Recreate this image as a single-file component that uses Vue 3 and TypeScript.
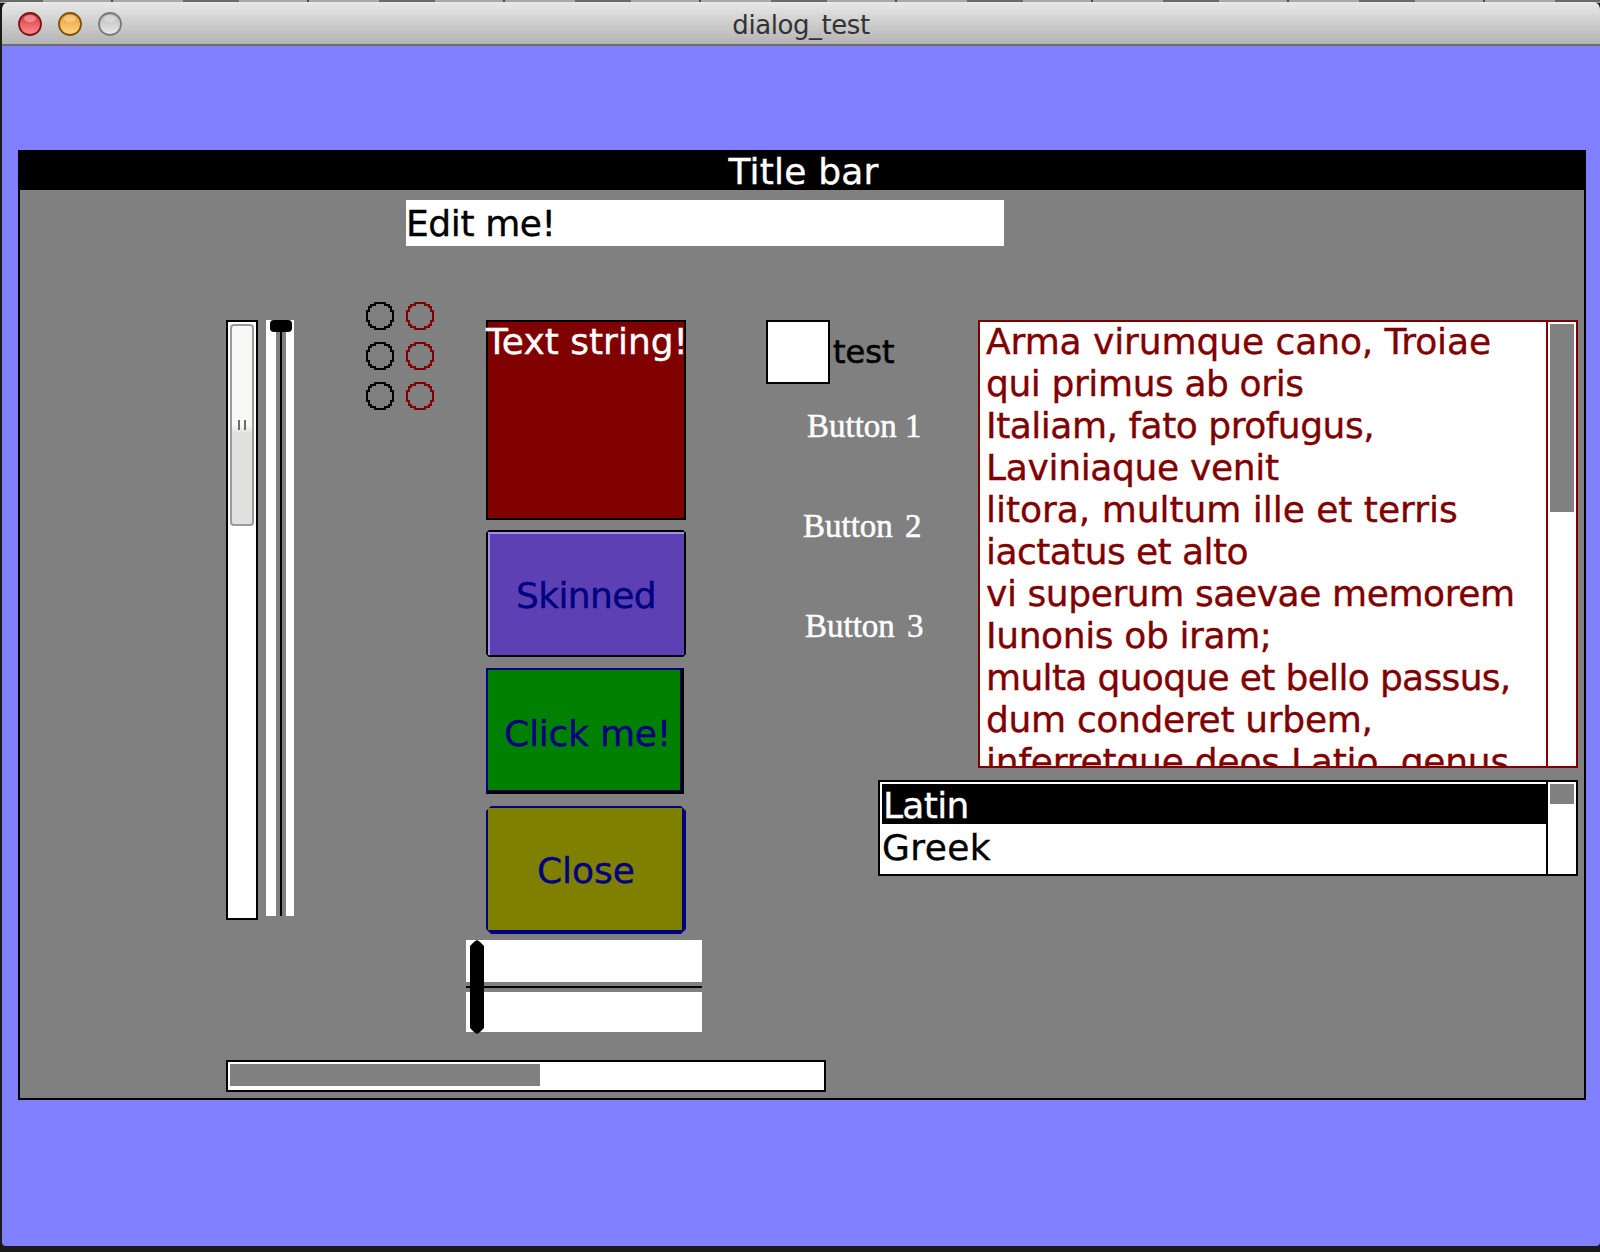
<script setup lang="ts">
const poem: { text: string; spacing: number }[] = [
  { text: 'Arma virumque cano, Troiae', spacing: -0.08 },
  { text: 'qui primus ab oris', spacing: -0.4 },
  { text: 'Italiam, fato profugus,', spacing: -0.49 },
  { text: 'Laviniaque venit', spacing: -0.32 },
  { text: 'litora, multum ille et terris', spacing: -0.03 },
  { text: 'iactatus et alto', spacing: -0.57 },
  { text: 'vi superum saevae memorem', spacing: -0.41 },
  { text: 'Iunonis ob iram;', spacing: -0.38 },
  { text: 'multa quoque et bello passus,', spacing: -0.67 },
  { text: 'dum conderet urbem,', spacing: -0.32 },
  { text: 'inferretque deos Latio, genus', spacing: -0.21 }
]
const radioRows = [0, 1, 2]
const sideButtons: { label: string; shift: string }[] = [
  { label: 'Button 1', shift: 'b1' },
  { label: 'Button 2', shift: 'b2' },
  { label: 'Button 3', shift: 'b3' }
]
const lights = [
  { id: 'r', a: '#ff9090', b: '#d8303a', c: '#7c1418' },
  { id: 'o', a: '#ffd98a', b: '#e89a28', c: '#80500c' },
  { id: 'g', a: '#ececec', b: '#b4b4b4', c: '#7a7a7a' }
]
</script>

<template>
  <div class="screen">
    <div class="menu-strip"></div>
    <div class="window">
      <header class="chrome">
        <div class="lights">
          <svg v-for="l in lights" :key="l.id" class="light" width="26" height="26" viewBox="0 0 26 26">
            <defs>
              <linearGradient :id="'lg' + l.id" x1="0" y1="0" x2="0" y2="1">
                <stop offset="0" :stop-color="l.b" />
                <stop offset="1" :stop-color="l.a" />
              </linearGradient>
            </defs>
            <circle cx="13" cy="13" r="11" :fill="'url(#lg' + l.id + ')'" :stroke="l.c" stroke-width="1.8" />
            <ellipse cx="13" cy="7.5" rx="6" ry="3.5" fill="#ffffff" opacity="0.35" />
          </svg>
        </div>
        <div class="chrome-title">dialog_test</div>
      </header>

      <main class="desktop">
        <section class="dialog">
          <div class="titlebar">Title bar</div>
          <div class="body">
            <div class="edit">Edit me!</div>

            <div class="widgets">
              <div class="vscroll">
                <div class="vthumb"><span class="grip"></span></div>
              </div>

              <div class="vslider">
                <div class="vtrack"><div class="vline"></div></div>
                <div class="vknob"></div>
              </div>

              <div class="radios">
                <template v-for="r in radioRows" :key="r">
                  <svg class="radio" width="28" height="28" viewBox="0 0 28 28" shape-rendering="crispEdges">
                    <path d="M9 1h10v2h4v2h2v4h2v10h-2v4h-2v2h-4v2H9v-2H5v-2H3v-4H1V9h2V5h2V3h4z" fill="none" stroke="#000" stroke-width="2" />
                  </svg>
                  <svg class="radio" width="28" height="28" viewBox="0 0 28 28" shape-rendering="crispEdges">
                    <path d="M9 1h10v2h4v2h2v4h2v10h-2v4h-2v2h-4v2H9v-2H5v-2H3v-4H1V9h2V5h2V3h4z" fill="none" stroke="#800000" stroke-width="2" />
                  </svg>
                </template>
              </div>

              <div class="center-col">
                <div class="textbox">Text string!</div>
                <div class="btn skinned">Skinned</div>
                <div class="btn clickme">Click me!</div>
                <div class="btn close">Close</div>
                <div class="hslider">
                  <div class="hband"></div>
                  <div class="hknob"></div>
                </div>
              </div>

              <div class="right-col">
                <div class="right-top">
                  <div class="check-col">
                    <div class="check-row">
                      <div class="checkbox"></div>
                      <span class="check-label">test</span>
                    </div>
                    <div v-for="b in sideButtons" :key="b.label" class="fancy" :class="b.shift">{{ b.label }}</div>
                  </div>

                  <div class="poem">
                    <div class="poem-text">
                      <div
                        v-for="(line, i) in poem"
                        :key="i"
                        class="poem-line"
                        :style="{ letterSpacing: line.spacing + 'px' }"
                      >{{ line.text }}</div>
                    </div>
                    <div class="poem-scroll"><div class="poem-thumb"></div></div>
                  </div>
                </div>

                <div class="listbox">
                  <div class="list-items">
                    <div class="item selected">Latin</div>
                    <div class="item greek">Greek</div>
                  </div>
                  <div class="list-scroll"><div class="list-thumb"></div></div>
                </div>
              </div>
            </div>

            <div class="progress"><div class="progress-fill"></div></div>
          </div>
        </section>
      </main>
    </div>
  </div>
</template>

<style>
html,
body {
  margin: 0;
  padding: 0;
  background: #1a1a1a;
}
</style>

<style scoped>
.screen {
  position: relative;
  width: 1600px;
  height: 1252px;
  background: #1a1a1a;
  overflow: hidden;
  font-family: "DejaVu Sans", sans-serif;
  -webkit-text-stroke: 0.35px currentColor;
}
.menu-strip {
  height: 3px;
  margin-bottom: -3px;
  background-color: #a8a8a8;
  background-image: linear-gradient(90deg, #4a4a4a 0 2px, transparent 2px 72px, #6a6a6a 72px 128px, transparent 128px);
  background-size: 196px 2px;
  background-position: 111px 0;
  background-repeat: repeat-x;
}
.window {
  position: relative;
  margin-left: 2px;
  width: 1598px;
  height: 1246px;
  box-sizing: border-box;
  padding-top: 2px;
  display: flex;
  flex-direction: column;
  overflow: hidden;
  border-radius: 0 0 4px 4px;
}
.chrome {
  position: relative;
  height: 44px;
  flex: none;
  box-sizing: border-box;
  background: linear-gradient(#e8e8e8, #b4b4b4);
  border-bottom: 2px solid #6e6e6e;
  border-radius: 7px 7px 0 0;
}
.lights {
  display: flex;
  gap: 14px;
  padding: 9px 0 0 15px;
}
.light {
  display: block;
}
.chrome-title {
  position: absolute;
  left: 0;
  right: 0;
  top: 7px;
  text-align: center;
  font-size: 26px;
  line-height: 32px;
  letter-spacing: -0.45px;
  color: #333;
  -webkit-text-stroke: 0;
}
.desktop {
  flex: 1;
  background: #8080ff;
  padding: 104px 14px 0 16px;
}
.dialog {
  width: 1568px;
  height: 950px;
  box-sizing: border-box;
  background: #808080;
  border: 2px solid #000;
  border-top: 0;
  display: flex;
  flex-direction: column;
}
.titlebar {
  margin: 0 -2px;
  height: 40px;
  flex: none;
  box-sizing: border-box;
  padding: 2px 0 0 3px;
  background: #000;
  color: #fff;
  font-size: 36px;
  line-height: 40px;
  text-align: center;
  letter-spacing: 0.2px;
}
.body {
  flex: 1;
  padding-top: 10px;
}
.edit {
  margin-left: 386px;
  width: 598px;
  height: 46px;
  background: #fff;
  color: #000;
  font-size: 36px;
  line-height: 48px;
  letter-spacing: -0.4px;
  white-space: nowrap;
}
.widgets {
  margin: 74px 0 0 206px;
  height: 740px;
  display: flex;
  align-items: flex-start;
}
.vscroll {
  width: 32px;
  height: 600px;
  box-sizing: border-box;
  flex: none;
  background: #fff;
  border: 2px solid #000;
  padding: 2px 2px 0 2px;
}
.vthumb {
  position: relative;
  height: 202px;
  box-sizing: border-box;
  border: 2px solid #9a9a9a;
  border-radius: 4px;
  background: linear-gradient(#f8f8f6 0, #f8f8f6 50%, #e0e0de 54%, #e0e0de 100%);
}
.grip {
  position: absolute;
  left: 6px;
  top: 94px;
  width: 8px;
  height: 10px;
  box-sizing: border-box;
  border-left: 2px solid #6e6e6e;
  border-right: 2px solid #6e6e6e;
}
.vslider {
  position: relative;
  margin-left: 8px;
  width: 28px;
  height: 596px;
  flex: none;
  background: #fff;
}
.vtrack {
  margin-left: 10px;
  width: 10px;
  height: 100%;
  background: #808080;
  display: flex;
  justify-content: center;
}
.vline {
  width: 2px;
  height: 100%;
  background: #000;
}
.vknob {
  position: absolute;
  left: 4px;
  top: 0;
  width: 22px;
  height: 12px;
  background: #000;
  border-radius: 4px;
}
.radios {
  margin-left: 72px;
  margin-top: -18px;
  flex: none;
  display: grid;
  grid-template-columns: 28px 28px;
  grid-auto-rows: 28px;
  gap: 12px;
}
.radio {
  display: block;
}
.center-col {
  margin-left: 32px;
  width: 236px;
  flex: none;
  display: flex;
  flex-direction: column;
  align-items: flex-start;
}
.textbox {
  margin-left: 20px;
  width: 200px;
  height: 200px;
  box-sizing: border-box;
  background: #800000;
  border: 2px solid #000;
  color: #fff;
  font-size: 36px;
  line-height: 40px;
  white-space: nowrap;
  text-indent: -2px;
}
.btn {
  margin-left: 20px;
  box-sizing: border-box;
  display: flex;
  align-items: center;
  justify-content: center;
  font-size: 36px;
  color: #000080;
}
.skinned {
  margin-top: 10px;
  width: 200px;
  height: 127px;
  padding-top: 4px;
  letter-spacing: -0.6px;
  background: #5c40b4;
  border: 2px solid #000;
  box-shadow: inset 2px 2px 0 #a090e8;
  clip-path: polygon(3px 0, calc(100% - 3px) 0, 100% 3px, 100% calc(100% - 3px), calc(100% - 3px) 100%, 3px 100%, 0 calc(100% - 3px), 0 3px);
}
.clickme {
  margin-top: 11px;
  width: 198px;
  height: 126px;
  padding: 6px 0 0 6px;
  letter-spacing: -0.2px;
  background: #008000;
  border: 2px solid #000080;
  border-right: 3px solid #000;
  border-bottom: 3px solid #000;
  box-shadow: inset -1px -1px 0 #000080;
}
.close {
  margin-top: 12px;
  width: 200px;
  height: 128px;
  padding: 2px 0 0 2px;
  background: #808000;
  border: 2px solid #000080;
  border-right-width: 4px;
  border-bottom-width: 4px;
  clip-path: polygon(5px 0, calc(100% - 5px) 0, 100% 5px, 100% calc(100% - 5px), calc(100% - 5px) 100%, 5px 100%, 0 calc(100% - 5px), 0 5px);
}
.hslider {
  position: relative;
  margin-top: 6px;
  width: 236px;
  height: 92px;
  background: #fff;
  display: flex;
  flex-direction: column;
  justify-content: flex-start;
}
.hband {
  margin-top: 42px;
  height: 10px;
  box-sizing: border-box;
  background: #000;
  border-top: 4px solid #808080;
  border-bottom: 4px solid #808080;
}
.hknob {
  position: absolute;
  left: 4px;
  top: 0;
  width: 14px;
  height: 94px;
  background: #000;
  clip-path: polygon(50% 0, 72% 2px, 86% 4px, 100% 6px, 100% calc(100% - 6px), 86% calc(100% - 4px), 72% calc(100% - 2px), 50% 100%, 28% calc(100% - 2px), 14% calc(100% - 4px), 0 calc(100% - 6px), 0 6px, 14% 4px, 28% 2px);
}
.right-col {
  margin-left: 64px;
  width: 812px;
  flex: none;
}
.right-top {
  display: flex;
  align-items: flex-start;
}
.check-col {
  width: 212px;
  flex: none;
}
.check-row {
  display: flex;
  align-items: center;
  height: 64px;
}
.checkbox {
  width: 64px;
  height: 64px;
  box-sizing: border-box;
  background: #fff;
  border: 2px solid #000;
}
.check-label {
  margin-left: 3px;
  font-size: 32px;
  line-height: 64px;
  color: #000;
  -webkit-text-stroke: 0.6px #000;
}
.fancy {
  font-family: "Liberation Serif", serif;
  font-size: 33px;
  font-weight: 400;
  line-height: 36px;
  color: #fff;
  white-space: nowrap;
  -webkit-text-stroke: 0.5px #fff;
}
.b1 {
  margin: 24px 0 0 41px;
}
.b2 {
  margin: 64px 0 0 37px;
  word-spacing: 4px;
}
.b3 {
  margin: 64px 0 0 39px;
  word-spacing: 4px;
}
.poem {
  width: 600px;
  height: 448px;
  box-sizing: border-box;
  background: #fff;
  border: 2px solid #800000;
  display: flex;
  overflow: hidden;
}
.poem-text {
  width: 566px;
  flex: none;
  margin-top: -1px;
  padding-left: 6px;
  box-sizing: border-box;
  color: #800000;
  font-size: 36px;
  line-height: 42px;
  white-space: nowrap;
  overflow: hidden;
}
.poem-scroll {
  flex: 1;
  box-sizing: border-box;
  border-left: 2px solid #800000;
  padding: 2px 2px 0 2px;
}
.poem-thumb {
  height: 188px;
  background: #808080;
}
.listbox {
  margin: 12px 0 0 112px;
  width: 700px;
  height: 96px;
  box-sizing: border-box;
  background: #fff;
  border: 2px solid #000;
  display: flex;
}
.list-items {
  flex: 1;
  padding: 2px 0 0 2px;
}
.item {
  height: 40px;
  margin-bottom: 2px;
  padding-left: 0;
  font-size: 36px;
  line-height: 44px;
  color: #000;
}
.greek {
  letter-spacing: 0.4px;
}
.selected {
  background: #000;
  color: #fff;
  letter-spacing: -0.7px;
  padding-left: 1px;
}
.list-scroll {
  width: 30px;
  flex: none;
  box-sizing: border-box;
  border-left: 2px solid #000;
  padding: 2px 2px 0 2px;
}
.list-thumb {
  height: 20px;
  background: #808080;
}
.progress {
  margin-left: 206px;
  width: 600px;
  height: 32px;
  box-sizing: border-box;
  background: #fff;
  border: 2px solid #000;
  padding: 2px;
}
.progress-fill {
  width: 310px;
  height: 22px;
  background: #808080;
}
</style>
